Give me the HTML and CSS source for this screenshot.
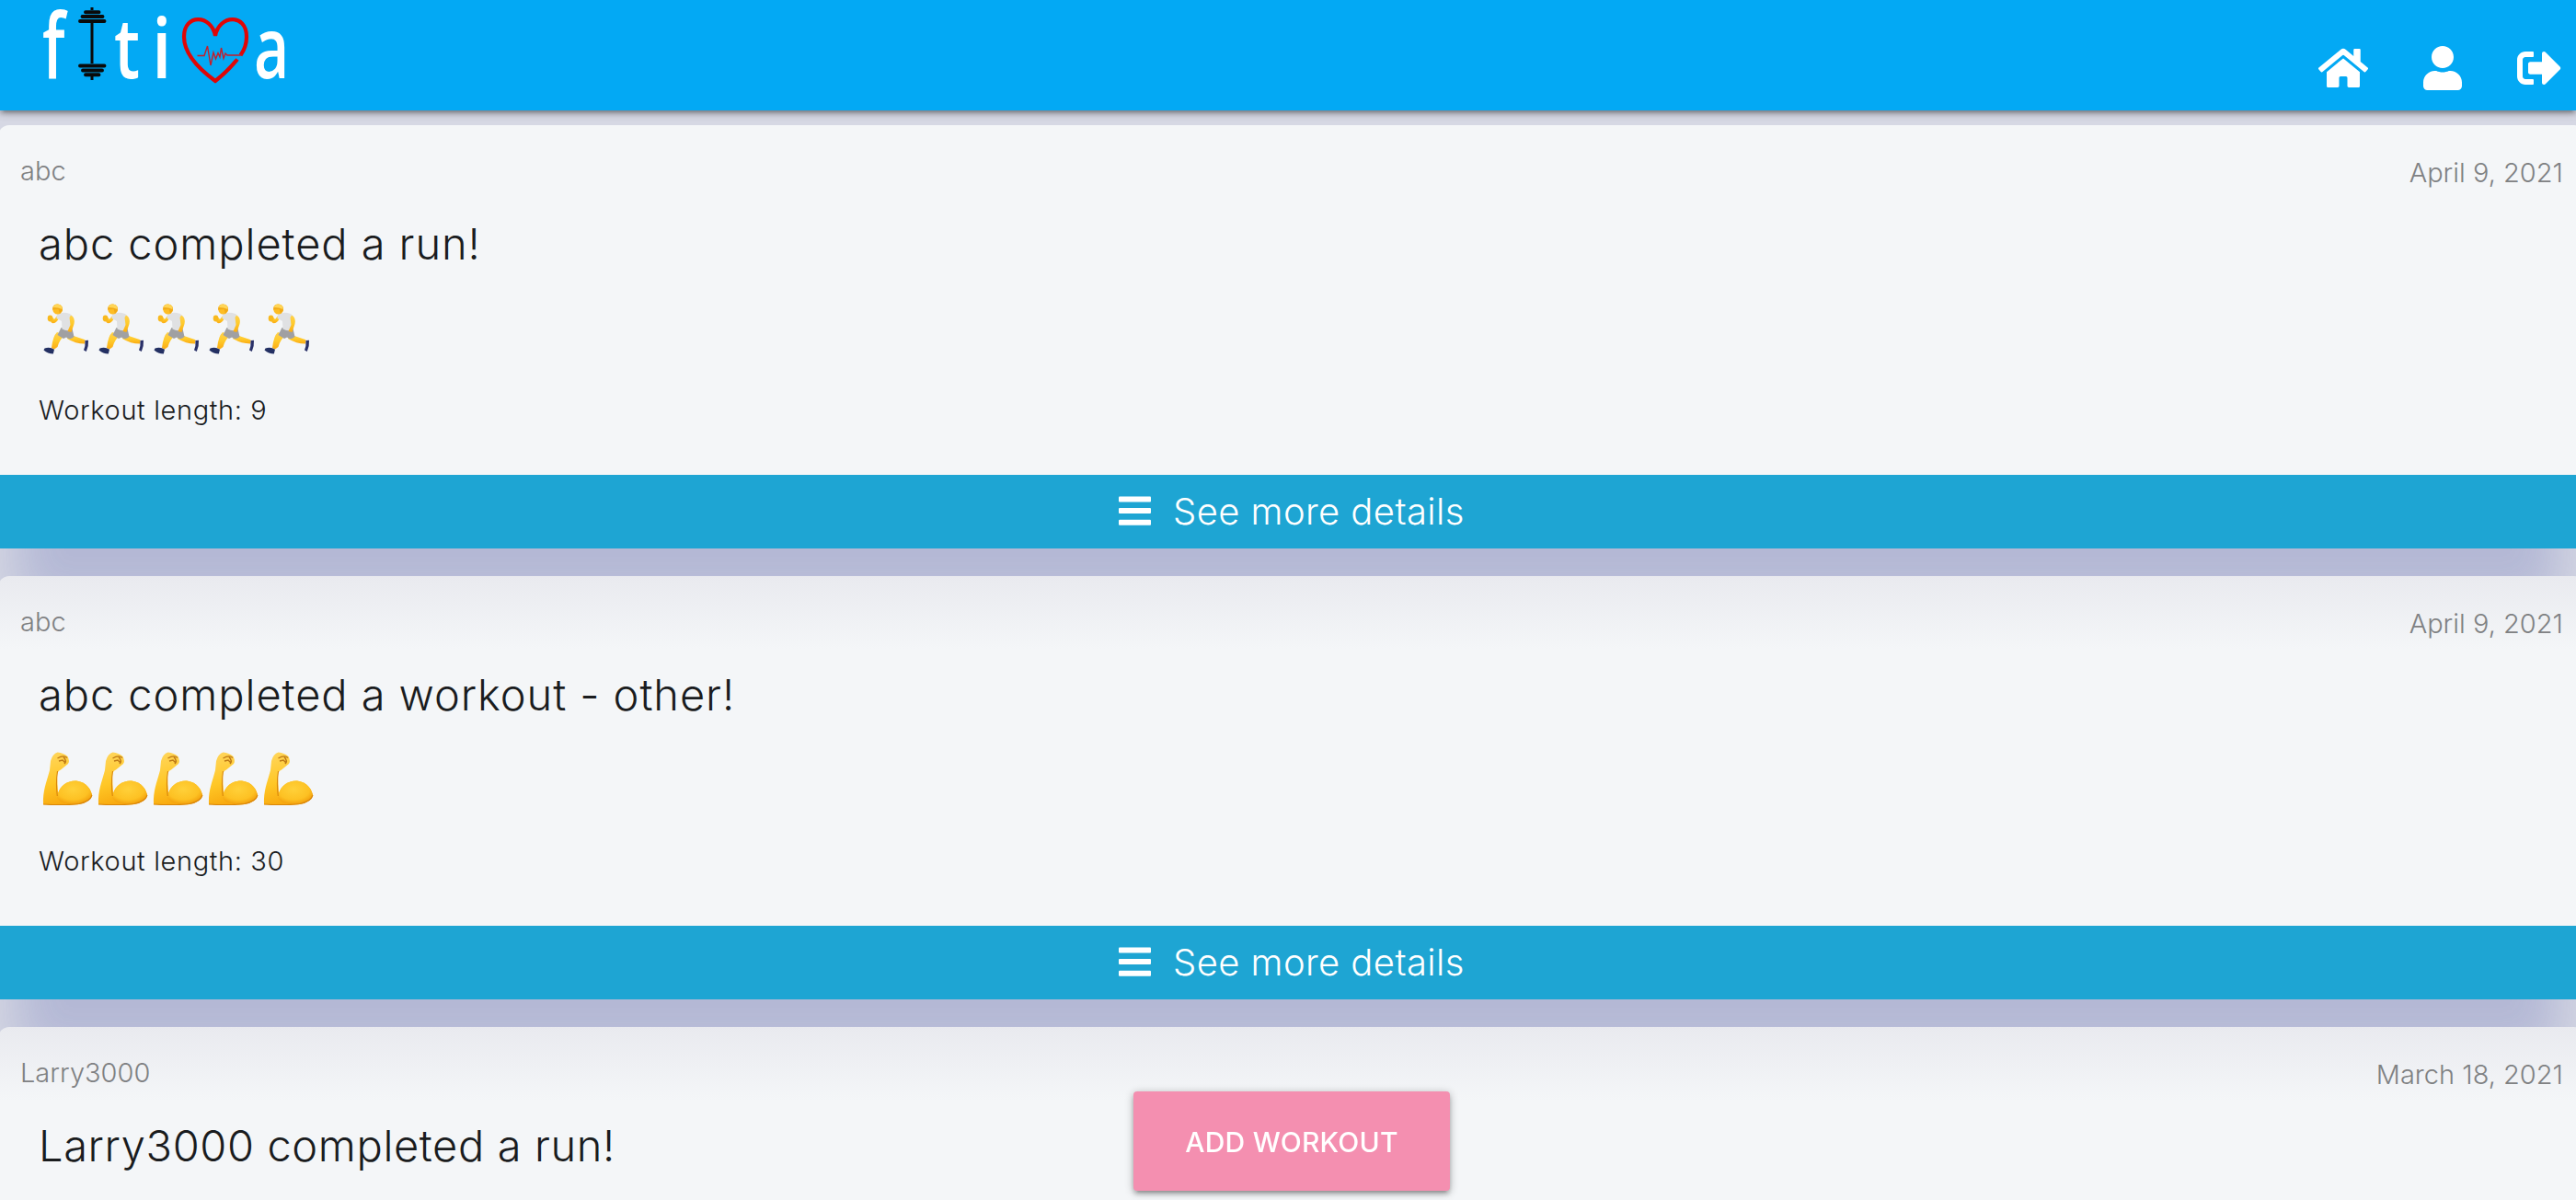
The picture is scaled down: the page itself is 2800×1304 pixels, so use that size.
FILE: index.html
```html
<!DOCTYPE html>
<html lang="en">
<head>
<meta charset="utf-8">
<title>Fitiva</title>
<link rel="stylesheet" href="styles.css">
</head>
<body>
<svg class="defs" width="0" height="0" aria-hidden="true">
  <defs>
    <linearGradient id="skin" x1="0" y1="0" x2="0" y2="1">
      <stop offset="0" stop-color="#ffd24d"/><stop offset="0.5" stop-color="#ffca2b"/><stop offset="1" stop-color="#fbab12"/>
    </linearGradient>
    <linearGradient id="arm" x1="0" y1="0" x2="0.3" y2="1">
      <stop offset="0" stop-color="#ffd761"/><stop offset="0.6" stop-color="#ffc726"/><stop offset="1" stop-color="#f8a90f"/>
    </linearGradient>
    <radialGradient id="bicep" cx="0.45" cy="0.35" r="0.65">
      <stop offset="0" stop-color="#ffd13a"/><stop offset="0.7" stop-color="#fdc123"/><stop offset="1" stop-color="#f3a00c"/>
    </radialGradient>
    <symbol id="runner" viewBox="0 0 60 66">
      <path d="M20 42L29 45Q23 49 20.500 58L17 60.500L14 59Q15.500 46 20 42Z" fill="url(#skin)"/>
      <path d="M33 44L38 46L50.500 50.200L50 54.500Q40 54.500 31 49Z" fill="url(#skin)"/>
      <path d="M6.500 59.500Q12 57.300 17 60.800L15.800 65.500Q10 65.500 5.500 61.500Z" fill="#233063"/>
      <path d="M50.500 51L54 50.800Q54.500 57 51.800 63L49 61.500Q51 57 50.500 51Z" fill="#293068"/>
      <path d="M24.500 37L36.500 38L38.500 47Q34 51 30 47.500L27 49L20.500 45Z" fill="#a0a0a2"/>
      <path d="M23.500 25L20 30Q16 34 13.500 31L11 24.500L14.500 25L17 28L21 23Z" fill="url(#skin)"/>
      <ellipse cx="12.500" cy="27" rx="2.800" ry="3.400" fill="#f8b91e"/>
      <path d="M20 22.500Q26 19.500 34 22L37 25Q35 32 36.500 39Q31 41.500 25.500 38.500L25 30L19.500 27Z" fill="#e0e1e3"/>
      <path d="M35 23.500Q40 26 38.500 33L35.500 42L31.500 41L34.500 34L33.500 26Z" fill="url(#skin)"/>
      <circle cx="20.500" cy="17.300" r="5.200" fill="#fdbd24"/>
      <path d="M15.500 14.500Q17 11 21 11.500Q27 12 25.800 19L23 22L21.500 17L15 17.500Z" fill="#f2ab18"/>
      <path d="M15.500 15Q17 11 21 11.500Q26.500 12.500 25.500 17L21 15.500Z" fill="#ffd557"/>
    </symbol>
    <symbol id="muscle" viewBox="0 0 60 66">
      <path d="M5 65C4.500 50 8 43 12 28L13 18Q15 10 20.500 8.500Q27 9 31.500 13Q34 18 32 21L24 27.500Q20 29 20 34L21 53C24 44 32 39 41 39.500C53 41 57 50 58 55C57 61 50 65 38 65.600C26 66 10 66 5 65Z" fill="url(#arm)"/>
      <path d="M21 53C24 44 32 39 41 39.500C53 41 57 50 58 55C57 61 50 64.500 38 65C29 65 21 62 20 57Z" fill="url(#bicep)"/>
      <path d="M20.500 29Q18.500 42 20.300 56M5 65Q30 66.500 44 64.500Q56 62 58 55" fill="none" stroke="#d9860b" stroke-width="1.100"/>
      <path d="M20.500 15Q27 11 31 14.500M22 18L26 17L29 20M27 13.500Q31 18 28 21" fill="none" stroke="#bc7815" stroke-width="1.400"/>
    </symbol>
    <symbol id="bars" viewBox="0 0 35 32">
      <rect y="0.500" width="35" height="6" rx="1"/><rect y="13" width="35" height="6" rx="1"/><rect y="25.700" width="35" height="6" rx="1"/>
    </symbol>
  </defs>
</svg>

<nav class="navbar">
  <a class="brand" href="#" aria-label="fitiva">
    <svg class="logo" viewBox="0 0 340 100">
      <g class="logo-text">
        <text transform="translate(46 85) scale(.7 1)" font-size="97">f</text>
        <text transform="translate(124 85) scale(.78 1)" font-size="91">t</text>
        <text transform="translate(165 85) scale(.85 1)" font-size="91">i</text>
        <text transform="translate(276 85) scale(.71 1)" font-size="93">a</text>
      </g>
      <path d="M100 8V11M100 25V69M100 83V87" stroke="#0a0a0a" stroke-width="3"/>
      <path d="M93 13.300H107.500M89.500 18H111.500M87 23H113.500M87 71.500H113.500M90 76.500H111M93 81.200H107.500" stroke="#0a0a0a" stroke-width="3.900" stroke-linecap="round"/>
      <path d="M258 64.500C251 73 242 82 234 88C219 77 200 59 200 40C200 14 230 16 234 39C238 16 268 14 268 40Q268 51 261.500 60" fill="none" stroke="#e00606" stroke-width="4.200"/>
      <path d="M214.500 60.500H222L225.500 50L229 71L232 57L234.500 64L237 57.500L239 62L240.500 52L243 63.500L245 58L247 60H263" fill="none" stroke="#c51d2a" stroke-width="1.400"/>
    </svg>
  </a>
  <div class="nav-links">
    <svg class="nav-home" viewBox="0 0 576 512"><path d="M280.370 148.260L96 300.110V464a16 16 0 0 0 16 16l112.060-.29a16 16 0 0 0 15.920-16V368a16 16 0 0 1 16-16h64a16 16 0 0 1 16 16v95.640a16 16 0 0 0 16 16.050L464 480a16 16 0 0 0 16-16V300L295.670 148.260a12.190 12.190 0 0 0-15.300 0zM571.600 251.470L488 182.560V44.050a12 12 0 0 0-12-12h-56a12 12 0 0 0-12 12v72.610L318.470 43a48 48 0 0 0-61 0L4.340 251.470a12 12 0 0 0-1.600 16.900l25.500 31A12 12 0 0 0 45.150 301l235.220-193.740a12.190 12.190 0 0 1 15.300 0L530.900 301a12 12 0 0 0 16.900-1.600l25.500-31a12 12 0 0 0-1.700-16.930z"/></svg>
    <svg class="nav-user" viewBox="0 0 448 512"><path d="M224 256c70.700 0 128-57.300 128-128S294.700 0 224 0 96 57.300 96 128s57.300 128 128 128zm89.600 32h-16.700c-22.200 10.200-46.900 16-72.900 16s-50.600-5.800-72.900-16h-16.700C60.200 288 0 348.200 0 422.400V464c0 26.500 21.500 48 48 48h352c26.500 0 48-21.500 48-48v-41.600c0-74.200-60.200-134.400-134.400-134.400z"/></svg>
    <svg class="nav-out" viewBox="0 0 512 512"><path d="M497 273L329 441c-15 15-41 4.500-41-17v-96H152c-13.300 0-24-10.700-24-24v-96c0-13.300 10.700-24 24-24h136V88c0-21.400 25.900-32 41-17l168 168c9.300 9.400 9.300 24.600 0 34zM192 436v-40c0-6.600-5.400-12-12-12H96c-17.700 0-32-14.300-32-32V160c0-17.700 14.300-32 32-32h84c6.600 0 12-5.400 12-12V76c0-6.600-5.400-12-12-12H96c-53 0-96 43-96 96v192c0 53 43 96 96 96h84c6.600 0 12-5.400 12-12z"/></svg>
  </div>
</nav>

<main class="feed">
  <article class="card first">
    <header class="meta"><span class="user">abc</span><time class="date">April 9, 2021</time></header>
    <div class="content">
      <h2 class="title">abc completed a run!</h2>
      <div class="emoji"><svg><use href="#runner"/></svg><svg><use href="#runner"/></svg><svg><use href="#runner"/></svg><svg><use href="#runner"/></svg><svg><use href="#runner"/></svg></div>
      <p class="length">Workout length: 9</p>
    </div>
    <a class="details" href="#"><svg><use href="#bars"/></svg><span>See more details</span></a>
  </article>
  <article class="card">
    <header class="meta"><span class="user">abc</span><time class="date">April 9, 2021</time></header>
    <div class="content">
      <h2 class="title">abc completed a workout - other!</h2>
      <div class="emoji"><svg><use href="#muscle"/></svg><svg><use href="#muscle"/></svg><svg><use href="#muscle"/></svg><svg><use href="#muscle"/></svg><svg><use href="#muscle"/></svg></div>
      <p class="length">Workout length: 30</p>
    </div>
    <a class="details" href="#"><svg><use href="#bars"/></svg><span>See more details</span></a>
  </article>
  <article class="card last">
    <header class="meta"><span class="user">Larry3000</span><time class="date">March 18, 2021</time></header>
    <div class="content">
      <h2 class="title numeric">Larry3000 completed a run!</h2>
    </div>
  </article>
</main>
<button class="add">ADD WORKOUT</button>
</body>
</html>
```
FILE: styles.css
```css
* { box-sizing: border-box; }
body {
  margin: 0;
  height: 1304px;
  overflow: hidden;
  background: #d6d8e4;
  font-family: Inter, "Liberation Sans", sans-serif;
  font-weight: 300;
  color: #1a1c1e;
}
.defs { position: absolute; }
.navbar {
  position: relative;
  z-index: 2;
  height: 120px;
  padding: 0 16px 0 0;
  display: flex;
  justify-content: space-between;
  background: #03a9f4;
  box-shadow: 0 4px 4px rgba(0,0,0,.14), 0 6px 2px -4px rgba(0,0,0,.12), 0 2px 10px rgba(0,0,0,.3);
}
.logo { display: block; width: 340px; height: 100px; overflow: visible; }
.logo-text { fill: #fff; font-family: "Open Sans", sans-serif; font-weight: 600; }
.nav-links { display: flex; align-items: center; gap: 60px; padding-top: 28px; fill: #fff; }
.nav-links svg { height: 48px; }
.nav-home { width: 54px; }
.nav-user { width: 42px; }
.nav-out { width: 48px; }

.feed { padding-top: 16px; display: flex; flex-direction: column; gap: 30px; }
.card {
  position: relative;
  flex: none;
  height: 460px;
  margin: 0 -2px;
  display: flex;
  flex-direction: column;
  border-radius: 12px 4px 0 0;
  background: linear-gradient(#e9eaef, #f4f6f8 80px);
  box-shadow: 0 80px 50px -20px rgba(80,90,170,.25);
}
.card.first { background: #f4f6f8; }
.card.last { height: 188px; }
.meta {
  display: flex;
  justify-content: space-between;
  padding: 30px 16px 0 24px;
  height: 84px;
  font-size: 29px;
  line-height: 40px;
  color: #7f8183;
}
.date { padding-top: 2px; }
.content { flex: 1; padding: 0 44px; }
.title {
  margin: 0;
  height: 90px;
  font-size: 47px;
  font-weight: 300;
  line-height: 90px;
  letter-spacing: .93px;
}
.title.numeric { letter-spacing: .62px; }
.emoji { display: flex; height: 66px; margin-top: 9px; }
.emoji svg { width: 60px; height: 66px; }
.length { margin: 41px 0 0; font-size: 29px; line-height: 40px; letter-spacing: .62px; }
.details {
  height: 80px;
  display: flex;
  justify-content: center;
  align-items: center;
  gap: 24px;
  padding: 0 0 2px 8px;
  background: #1ea5d3;
  color: #fff;
  font-size: 40px;
  letter-spacing: .4px;
  text-decoration: none;
}
.details svg { width: 35px; height: 32px; fill: #fff; }
.add {
  position: fixed;
  left: 1232px;
  bottom: 10px;
  width: 344px;
  height: 108px;
  padding: 2px 0 0;
  border: 0;
  border-radius: 4px;
  background: #f48fb0;
  color: #fff;
  font: 500 30px Inter, sans-serif;
  letter-spacing: .2px;
  box-shadow: 0 4px 4px rgba(0,0,0,.14), 0 6px 2px -4px rgba(0,0,0,.12), 0 2px 10px rgba(0,0,0,.3);
}
```
